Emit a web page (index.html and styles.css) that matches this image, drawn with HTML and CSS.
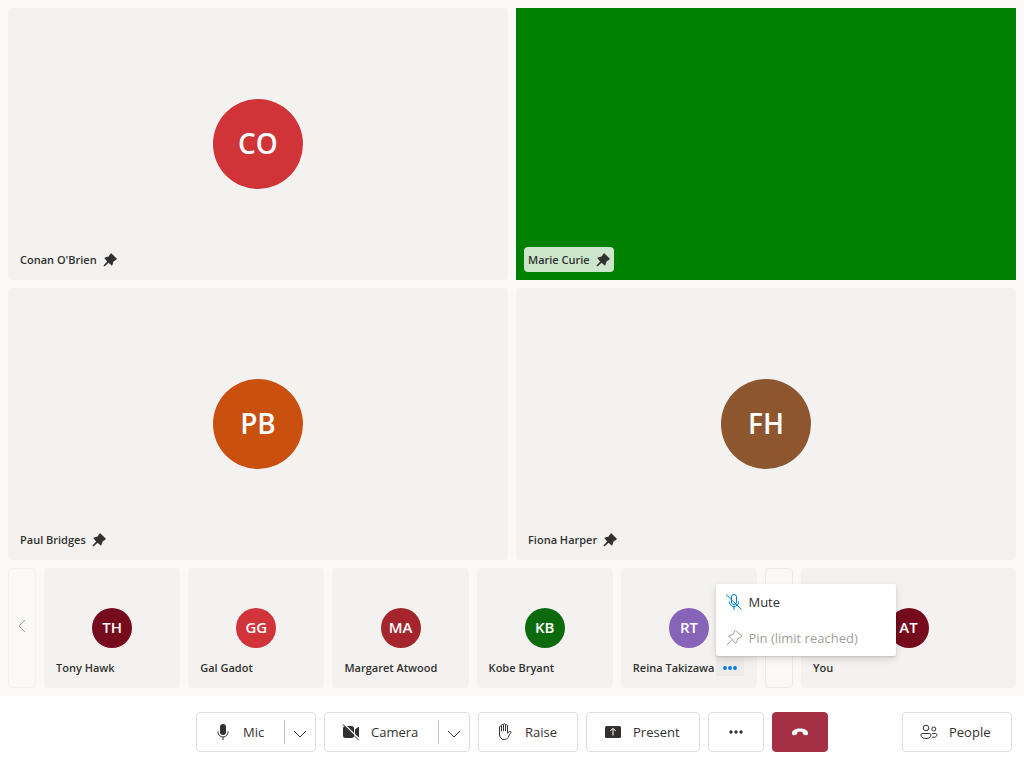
FILE: index.html
```html
<!DOCTYPE html>
<html lang="en">
<head>
<meta charset="utf-8">
<meta name="viewport" content="width=device-width, initial-scale=1">
<title>Call</title>
<link rel="stylesheet" href="styles.css">
</head>
<body>
<svg class="sprite" aria-hidden="true">
  <symbol id="pin" viewBox="0 0 20 20"><path d="M12.500 1a1.200 1.200 0 0 0-2 .3L8 5 2.800 6.600a.8.800 0 0 0-.4 1.400L6 12l-5 5.500v1.500h1.500L8 14l4 3.600a.8.800 0 0 0 1.400-.4L15 12l3.800-2.500a1.200 1.200 0 0 0 .3-2z"/></symbol>
  <symbol id="chevron" viewBox="0 0 14 8"><path d="M1 1l6 6 6-6" fill="none" stroke="currentColor"/></symbol>
</svg>
<div class="app">
  <main class="stage">
    <section class="grid" aria-label="Pinned participants">
      <article class="tile">
        <div class="avatar avatar-large red">CO</div>
        <div class="label">Conan O'Brien <svg class="pin"><use href="#pin"/></svg></div>
      </article>
      <article class="tile video">
        <div class="label label-video">Marie Curie <svg class="pin"><use href="#pin"/></svg></div>
      </article>
      <article class="tile">
        <div class="avatar avatar-large orange">PB</div>
        <div class="label">Paul Bridges <svg class="pin"><use href="#pin"/></svg></div>
      </article>
      <article class="tile">
        <div class="avatar avatar-large brown">FH</div>
        <div class="label">Fiona Harper <svg class="pin"><use href="#pin"/></svg></div>
      </article>
    </section>
    <section class="strip" aria-label="Other participants">
      <button class="pager" aria-label="Previous page" disabled>
        <svg width="8" height="14" viewBox="0 0 8 14"><path d="M7 1L1 7l6 6" fill="none" stroke="currentColor"/></svg>
      </button>
      <article class="tile"><div class="avatar maroon">TH</div><div class="label">Tony Hawk</div></article>
      <article class="tile"><div class="avatar red">GG</div><div class="label">Gal Gadot</div></article>
      <article class="tile"><div class="avatar crimson">MA</div><div class="label">Margaret Atwood</div></article>
      <article class="tile"><div class="avatar green">KB</div><div class="label">Kobe Bryant</div></article>
      <article class="tile">
        <div class="avatar purple">RT</div>
        <div class="label">Reina Takizawa
          <div class="menu-anchor">
            <button class="tile-more" aria-label="More options" aria-expanded="true">
              <svg width="14" height="4" viewBox="0 0 14 4"><circle cx="2" cy="2" r="1.900"/><circle cx="7" cy="2" r="1.900"/><circle cx="12" cy="2" r="1.900"/></svg>
            </button>
            <div class="menu" role="menu">
              <button class="menu-item" role="menuitem">
                <svg class="mute" width="16" height="16" viewBox="0 0 16 16" fill="none" stroke="currentColor"><path d="M5.500 3a2.500 2.500 0 0 1 5 0v5a2.500 2.500 0 0 1-5 0zM3.500 7.500v.5a4.500 4.500 0 0 0 9 0v-.5M8 12.500V16M0 .5l15.500 15"/></svg>
                Mute
              </button>
              <button class="menu-item" role="menuitem" disabled>
                <svg width="16" height="16" viewBox="0 0 16 16" fill="none" stroke="currentColor" stroke-linejoin="round"><path d="M8.800.9a.9.900 0 0 1 1.400-.2l5 5a.9.900 0 0 1-.2 1.400l-3.400 1.800-1.300 3.900c-.1.400-.5.500-.8.200L3 6.500c-.3-.3-.2-.7.200-.8L7 4.400zM6 9.700L1 15"/></svg>
                Pin (limit reached)
              </button>
            </div>
          </div>
        </div>
      </article>
      <button class="pager" aria-label="Next page"></button>
      <article class="tile local"><div class="avatar maroon">AT</div><div class="label">You</div></article>
    </section>
  </main>
  <footer class="controls">
    <div class="center">
      <div class="split mic">
        <button class="split-main">
          <svg class="icon" viewBox="0 0 20 20"><rect x="7" y="2" width="6" height="11" rx="3"/><path d="M5 9.500v.5a5 5 0 0 0 10 0v-.5M10 15v3" fill="none" stroke="currentColor"/></svg>
          Mic
        </button>
        <button class="split-arrow" aria-label="Microphone options"><svg width="14" height="8"><use href="#chevron"/></svg></button>
      </div>
      <div class="split camera">
        <button class="split-main">
          <svg class="icon" viewBox="0 0 20 20"><rect x="2" y="4" width="11" height="12" rx="2.500"/><path d="M14 7.500l3.200-2.400c.4-.3.800 0 .8.400v9c0 .5-.4.700-.8.400L14 12.500z"/><path d="M2.500 1.500l16 16" stroke="#fff" stroke-width="1.500"/><path d="M1.800 2.300l16 16" stroke="currentColor"/></svg>
          Camera
        </button>
        <button class="split-arrow" aria-label="Camera options"><svg width="14" height="8"><use href="#chevron"/></svg></button>
      </div>
      <button class="control raise">
        <svg class="icon" viewBox="0 0 20 20" fill="none" stroke="currentColor" stroke-linecap="round" stroke-linejoin="round"><path d="M4.500 10V5a1 1 0 0 1 2 0v4M6.500 8.500V3.500a1 1 0 0 1 2 0v5M8.500 8V2.700a1 1 0 0 1 2 0V8M10.500 8.500V3.700a1 1 0 0 1 2 0v7.600c1-1.300 2-1.800 3.100-1.700.7.100.9.800.4 1.200-1.500 1.200-2 3-3 4.700-.8 1.500-2 2-3.700 2-3.400 0-4.800-2.500-4.800-5.500v-3"/></svg>
        Raise
      </button>
      <button class="control present">
        <svg class="icon" viewBox="0 0 20 20"><rect x="2" y="4" width="16" height="12" rx="1.500"/><path d="M10 13.500v-7M7.300 9L10 6.300 12.700 9" fill="none" stroke="#fff"/></svg>
        Present
      </button>
      <button class="control compact" aria-label="More">
        <svg width="14" height="4" viewBox="0 0 14 4"><circle cx="2" cy="2" r="1.700"/><circle cx="7" cy="2" r="1.700"/><circle cx="12" cy="2" r="1.700"/></svg>
      </button>
      <button class="control compact leave" aria-label="Leave">
        <svg width="18" height="8" viewBox="0 0 18 8"><path d="M9 .5c4.500 0 8.200 1.700 8 4.700-.1 1.500-.9 2.200-2.200 2l-1.700-.4c-.9-.2-1.300-.7-1.400-1.500l-.1-1.100c-1.600-.5-3.600-.5-5.200 0l-.1 1.100c-.1.800-.5 1.300-1.400 1.500l-1.700.4C1.900 7.400 1.100 6.700 1 5.200.8 2.200 4.500.5 9 .5z"/></svg>
      </button>
    </div>
    <div class="side">
      <button class="control people">
        <svg class="icon" viewBox="0 0 20 20" fill="none" stroke="currentColor"><circle cx="7" cy="6" r="2.800"/><circle cx="14.800" cy="7" r="2"/><path d="M3.500 11.500h7c.9 0 1.500.600 1.500 1.500 0 2.200-2 3.500-5 3.500s-5-1.300-5-3.500c0-.9.600-1.500 1.500-1.500zM13.300 11.500h3.200c.9 0 1.500.600 1.500 1.300 0 1.700-1.800 2.700-4.700 2.400"/></svg>
        People
      </button>
    </div>
  </footer>
</div>
</body>
</html>
```

FILE: styles.css
```css
* { box-sizing: border-box; }
body {
  margin: 0;
  background: #faf9f8;
  color: #323130;
  font-family: "Open Sans", "Noto Sans", sans-serif;
  font-size: 13px;
  line-height: 20px;
}
button {
  font: inherit;
  color: inherit;
  margin: 0;
  padding: 0;
  border: 0;
  background: none;
}
svg { display: block; flex: none; fill: currentColor; }
svg[fill="none"] { fill: none; }
.sprite { display: none; }

.app { min-height: 100vh; display: flex; flex-direction: column; }
.stage { flex: 1; display: flex; flex-direction: column; gap: 8px; padding: 8px; }
.grid {
  flex: 1;
  display: grid;
  grid-template-columns: 1fr 1fr;
  grid-auto-rows: 1fr;
  gap: 8px;
}
.tile {
  display: grid;
  min-width: 0;
  background: #f3f2f1;
  border-radius: 4px;
}
.tile > * { grid-area: 1 / 1; }
.video { background: #008000; border-radius: 0; }

.avatar {
  place-self: center;
  display: grid;
  place-items: center;
  width: 40px;
  height: 40px;
  padding-bottom: 2px;
  border-radius: 50%;
  color: #fff;
  font-size: 15px;
  font-weight: 600;
}
.avatar-large { width: 90px; height: 90px; font-size: 28px; line-height: 36px; }
.red { background: #d13438; }
.orange { background: #ca5010; }
.brown { background: #8e562e; }
.maroon { background: #750b1c; }
.crimson { background: #a4262c; }
.green { background: #0b6a0b; }
.purple { background: #8764b8; }

.label {
  place-self: end start;
  display: flex;
  align-items: center;
  gap: 6px;
  margin: 8px;
  padding: 2px 4px;
  border-radius: 4px;
  font-size: 11px;
  font-weight: 600;
  white-space: nowrap;
}
.grid .label { height: 25px; }
.label-video { background: rgba(255, 255, 255, 0.8); }
.pin { width: 14px; height: 14px; }

.strip { display: flex; gap: 8px; height: 120px; }
.strip .tile { flex: 1; }
.strip .local { flex: none; width: 22%; max-width: 215px; }
.pager {
  width: 28px;
  display: grid;
  place-items: center;
  padding-bottom: 4px;
  border: 1px solid #edebe9;
  border-radius: 4px;
  color: #a19f9d;
}
.pager:disabled { border-color: #f3f2f1; }

.menu-anchor {
  position: relative;
  align-self: flex-start;
  margin-top: -2px;
  margin-left: -4px;
}
.tile-more {
  display: grid;
  place-items: center;
  width: 28px;
  height: 20px;
  padding-top: 4px;
  background: #edebe9;
  color: #0078d4;
}
.menu {
  position: absolute;
  left: 0;
  bottom: 100%;
  z-index: 1;
  width: 180px;
  background: #fff;
  border-radius: 2px;
  box-shadow: 0 3px 7px rgba(0, 0, 0, 0.13), 0 1px 2px rgba(0, 0, 0, 0.11);
}
.menu-item {
  display: flex;
  align-items: center;
  gap: 6px;
  width: 100%;
  height: 36px;
  padding: 0 10px;
  font-size: 13px;
  font-weight: 400;
}
.menu-item:disabled { color: #a19f9d; }
.mute { color: #0078d4; }

.controls {
  display: grid;
  grid-template-columns: 1fr auto 1fr;
  padding: 16px 12px;
  background: #fff;
}
.center { grid-column: 2; display: flex; gap: 8px; }
.side { display: flex; justify-content: flex-end; }
.control, .split {
  display: flex;
  align-items: center;
  height: 40px;
  border: 1px solid #e1dfdd;
  border-radius: 4px;
}
.control, .split-main { gap: 10px; padding-left: 16px; }
.split-main { flex: 1; display: flex; align-items: center; height: 100%; }
.split-arrow {
  display: grid;
  place-items: center;
  width: 31px;
  height: 24px;
  padding-top: 4px;
  border-left: 1px solid #c8c6c4;
}
.icon { width: 20px; height: 20px; }
.icon[fill="none"] { fill: none; }
.mic { min-width: 120px; }
.camera { min-width: 146px; }
.raise { min-width: 100px; }
.present { min-width: 114px; }
.people { min-width: 110px; }
.control.compact { justify-content: center; width: 56px; padding: 0; }
.leave { background: #a42e43; border-color: #a42e43; color: #fff; }
```
